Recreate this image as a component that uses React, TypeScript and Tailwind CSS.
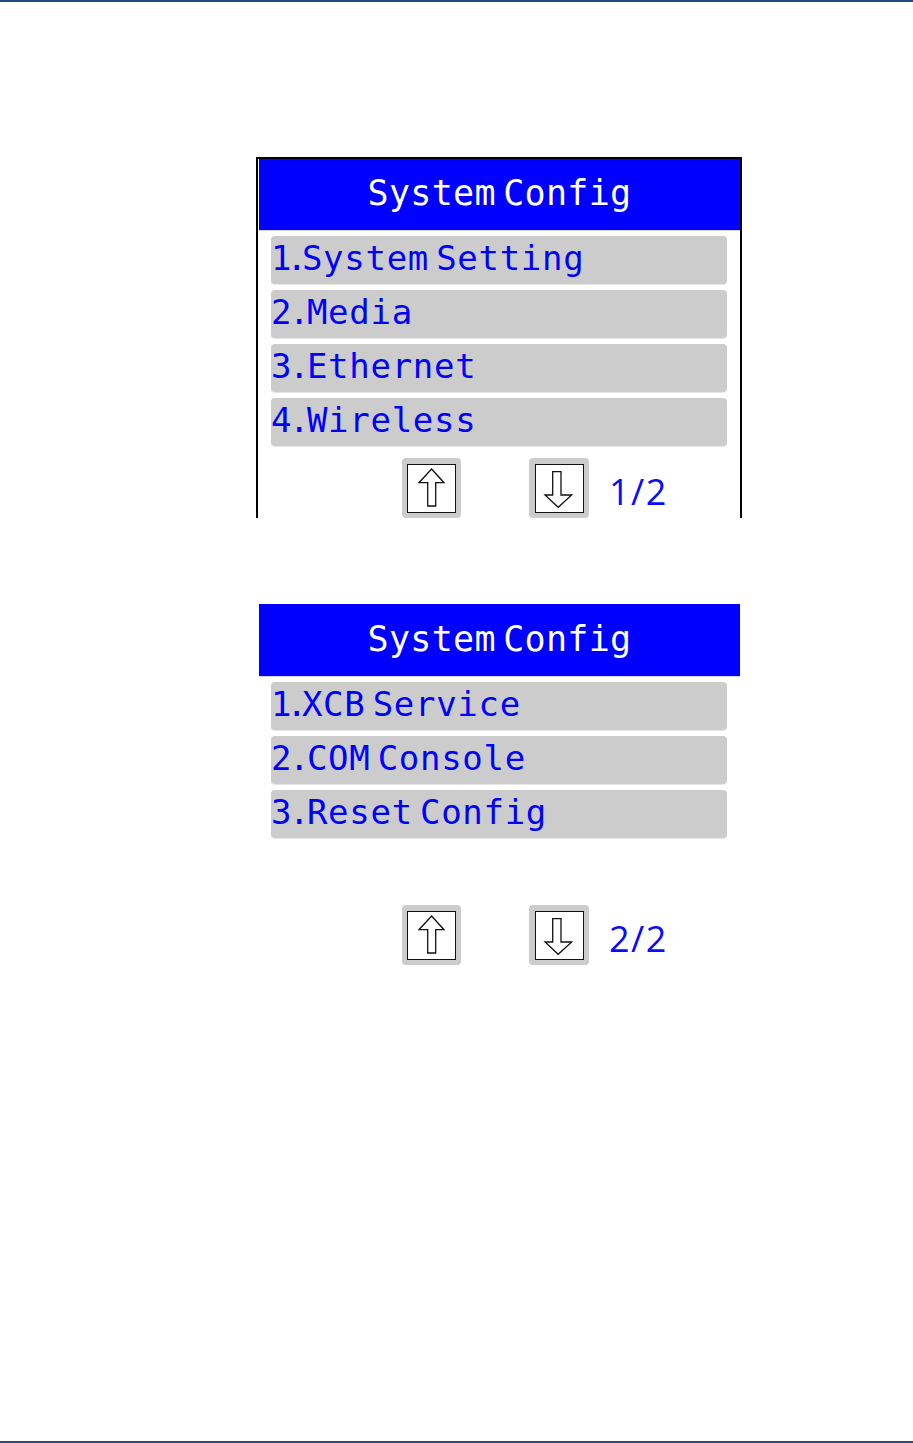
import React from "react";

const mono = { fontFamily: '"DejaVu Sans Mono", monospace' } as React.CSSProperties;

function UpButton() {
  return (
    <div className="w-[59px] h-[60px] bg-[#cccccc] rounded-[4px] pl-[5px] pt-[6px] shrink-0">
      <div className="relative w-[49px] h-[49px] bg-white border-[1.5px] border-[#111111]">
        <svg className="absolute -left-[1.5px] -top-[1.5px]" width="49" height="49" viewBox="0 0 49 49">
          <path d="M24.6 5 L37 18.7 L28.7 18.7 L28.7 42 L20.7 42 L20.7 18.7 L12 18.7 Z" fill="white" stroke="#111" strokeWidth="1.3" strokeLinejoin="miter" />
        </svg>
      </div>
    </div>
  );
}

function DownButton() {
  return (
    <div className="w-[60px] h-[60px] bg-[#cccccc] rounded-[4px] pl-[6px] pt-[6px] shrink-0">
      <div className="relative w-[49px] h-[49px] bg-white border-[1.5px] border-[#111111]">
        <svg className="absolute -left-[1.5px] -top-[1.5px]" width="49" height="49" viewBox="0 0 49 49">
          <path d="M17.7 7.7 L26 7.7 L26 31 L36.7 31 L23.2 43.3 L10 31 L17.7 31 Z" fill="white" stroke="#111" strokeWidth="1.3" strokeLinejoin="miter" />
        </svg>
      </div>
    </div>
  );
}

function Header({ tall }: { tall?: boolean }) {
  return (
    <div className="flex flex-col">
      <div
        className={
          tall
            ? "w-[481px] h-[72px] bg-[#0000ff] text-white text-center text-[35px] leading-[71px] tracking-[0.3px] [word-spacing:-14px]"
            : "w-[481px] h-[71px] bg-[#0000ff] text-white text-center text-[35px] leading-[68px] tracking-[0.3px] [word-spacing:-14px]"
        }
        style={mono}
      >
        System Config
      </div>
      <div className="w-[481px] h-[1px] bg-[#d4d4ff]" />
    </div>
  );
}

type Item = { n: string; label: string };

function Rows({ items }: { items: Item[] }) {
  return (
    <div className="flex flex-col gap-[6px] mt-[5px] ml-[12px]">
      {items.map((t) => (
        <div
          key={t.label}
          className="w-[456px] h-[48px] bg-[#cccccc] rounded-[4px] text-[#0000ff] text-[34px] leading-[44px] whitespace-pre [word-spacing:-14px] shadow-[0_1px_0_#e6e6e6]"
          style={mono}
        >
          <span className={t.n === "1." ? "tracking-[-5px]" : "tracking-[-2.5px]"}>{t.n}</span>
          <span className="tracking-[0.7px]">{t.label}</span>
        </div>
      ))}
    </div>
  );
}

function Pager({ label }: { label: string }) {
  return (
    <div className="flex items-start ml-[143px]">
      <UpButton />
      <div className="w-[68px] shrink-0" />
      <DownButton />
      <span
        className="ml-[20px] mt-[16px] text-[36px] leading-[36px] tracking-[1.5px] font-medium text-[#0a0aff]"
        style={{ fontFamily: '"Open Sans", "Noto Sans", sans-serif' }}
      >
        {label}
      </span>
    </div>
  );
}

export default function App() {
  return (
    <div className="w-[913px] h-[1443px] bg-white flex flex-col justify-between overflow-hidden">
      <div className="h-[2px] bg-[#1f4e7a] shrink-0" />
      <div className="flex-1 flex flex-col pl-[256px] pt-[155px]">
        <div className="w-[486px] h-[361px] border-t-2 border-x-2 border-black pl-[1px] overflow-hidden flex flex-col">
          <Header />
          <Rows
            items={[
              { n: "1.", label: "System Setting" },
              { n: "2.", label: "Media" },
              { n: "3.", label: "Ethernet" },
              { n: "4.", label: "Wireless" },
            ]}
          />
          <div className="mt-[12px]">
            <Pager label="1/2" />
          </div>
        </div>
        <div className="mt-[86px] pl-[3px] flex flex-col">
          <Header tall />
          <Rows
            items={[
              { n: "1.", label: "XCB Service" },
              { n: "2.", label: "COM Console" },
              { n: "3.", label: "Reset Config" },
            ]}
          />
          <div className="mt-[67px]">
            <Pager label="2/2" />
          </div>
        </div>
      </div>
      <div className="h-[2px] bg-[#1f4e7a] shrink-0" />
    </div>
  );
}
